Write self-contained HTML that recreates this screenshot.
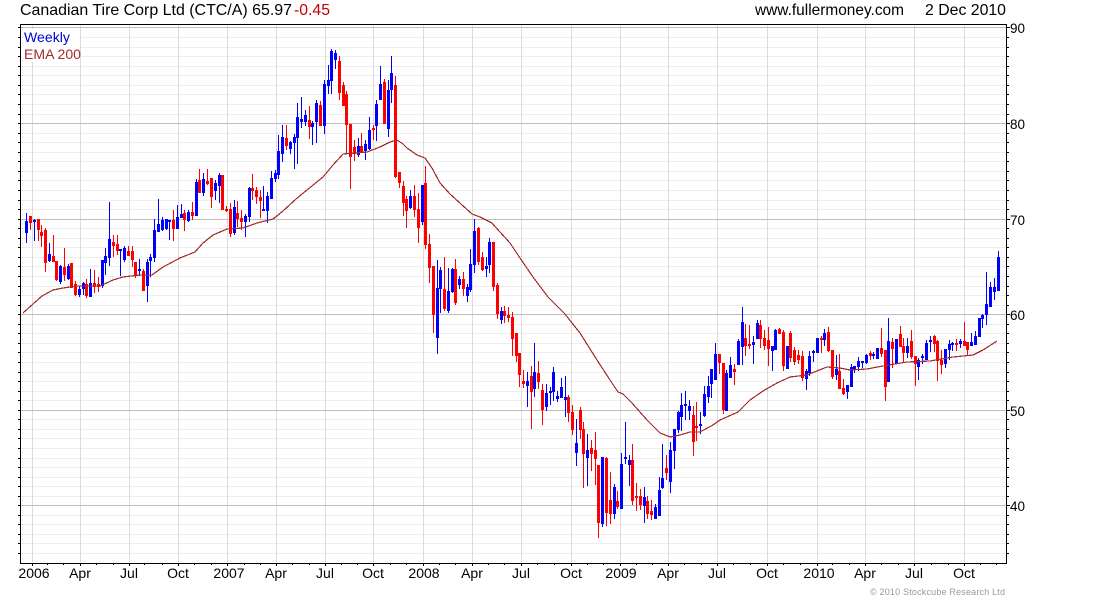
<!DOCTYPE html>
<html>
<head>
<meta charset="utf-8">
<title>Canadian Tire Corp Ltd</title>
<style>
html,body{margin:0;padding:0;background:#fff;width:1100px;height:600px;overflow:hidden}
svg{display:block}
text{font-family:"Liberation Sans",Arial,sans-serif}
</style>
</head>
<body>
<svg width="1100" height="600" viewBox="0 0 1100 600" xmlns="http://www.w3.org/2000/svg">
<rect width="1100" height="600" fill="#fff"/>
<g shape-rendering="crispEdges" fill="none">
<path stroke="#eeeeee" d="M21 37.5H1006M21 47.5H1006M21 56.5H1006M21 66.5H1006M21 75.5H1006M21 85.5H1006M21 94.5H1006M21 104.5H1006M21 114.5H1006M21 133.5H1006M21 142.5H1006M21 152.5H1006M21 161.5H1006M21 171.5H1006M21 180.5H1006M21 190.5H1006M21 200.5H1006M21 209.5H1006M21 228.5H1006M21 238.5H1006M21 247.5H1006M21 257.5H1006M21 266.5H1006M21 276.5H1006M21 286.5H1006M21 295.5H1006M21 305.5H1006M21 324.5H1006M21 333.5H1006M21 343.5H1006M21 352.5H1006M21 362.5H1006M21 372.5H1006M21 381.5H1006M21 391.5H1006M21 400.5H1006M21 419.5H1006M21 429.5H1006M21 438.5H1006M21 448.5H1006M21 458.5H1006M21 467.5H1006M21 477.5H1006M21 486.5H1006M21 496.5H1006M21 515.5H1006M21 524.5H1006M21 534.5H1006M21 543.5H1006M21 553.5H1006"/>
<path stroke="#dcdcdc" d="M32.5 25V563M80.5 25V563M129.5 25V563M178.5 25V563M227.5 25V563M276.5 25V563M325.5 25V563M373.5 25V563M423.5 25V563M472.5 25V563M521.5 25V563M571.5 25V563M620.5 25V563M668.5 25V563M717.5 25V563M767.5 25V563M817.5 25V563M865.5 25V563M914.5 25V563M964.5 25V563"/>
<path stroke="#bdbdbd" d="M21 27.5H1006M21 123.5H1006M21 219.5H1006M21 314.5H1006M21 410.5H1006M21 505.5H1006"/>
<rect x="21" y="29" width="59" height="33" fill="#fff"/>
</g>
<g shape-rendering="crispEdges" fill="none">
<path stroke="#0000ff" stroke-width="1" d="M26.5 213V243M34.5 219V241M49.5 243V262M60.5 265V284M68.5 264V280M79.5 286V297M83.5 282V295M90.5 269V297M102.5 260V288M105.5 248V275M109.5 202V266M120.5 249V276M124.5 246V262M139.5 259V276M147.5 259V302M150.5 254V277M154.5 219V262M158.5 199V232M162.5 217V231M166.5 219V230M169.5 220V240M177.5 205V229M181.5 204V218M188.5 210V222M196.5 179V216M203.5 173V196M215.5 180V200M219.5 173V203M234.5 200V235M245.5 214V237M249.5 187V222M263.5 186V211M267.5 192V223M271.5 171V199M275.5 170V182M278.5 135V179M282.5 125V162M290.5 141V154M294.5 134V169M297.5 103V164M301.5 97V128M305.5 110V126M312.5 121V145M316.5 100V143M324.5 80V134M328.5 65V94M331.5 49V94M335.5 50V69M358.5 138V157M365.5 140V160M369.5 117V150M376.5 100V141M380.5 66V100M388.5 80V137M391.5 56V103M410.5 190V209M422.5 185V225M437.5 260V354M440.5 267V313M448.5 268V313M452.5 268V293M459.5 276V289M467.5 284V302M470.5 249V292M474.5 219V273M486.5 257V277M489.5 238V273M501.5 307V324M527.5 372V407M534.5 343V397M546.5 384V411M550.5 387V405M553.5 367V401M557.5 391V402M561.5 378V398M565.5 376V417M576.5 419V466M587.5 434V486M602.5 457V527M614.5 484V519M621.5 453V509M625.5 422V464M629.5 455V486M644.5 487V523M655.5 504V519M659.5 477V516M662.5 444V489M670.5 442V493M674.5 429V469M678.5 411V433M681.5 393V431M685.5 391V420M689.5 400V420M700.5 412V434M704.5 386V417M708.5 376V403M711.5 369V398M715.5 343V380M726.5 370V411M730.5 357V378M738.5 339V365M742.5 307V365M753.5 336V364M757.5 320V339M772.5 346V371M775.5 329V350M787.5 346V369M806.5 369V390M809.5 351V376M813.5 350V362M817.5 338V353M824.5 329V346M836.5 355V380M847.5 385V399M851.5 364V387M854.5 366V373M858.5 357V371M862.5 361V368M866.5 354V364M873.5 352V359M877.5 348V359M888.5 318V382M896.5 339V364M907.5 338V358M918.5 358V380M922.5 354V364M926.5 340V360M930.5 336V352M945.5 349V368M949.5 340V360M952.5 342V351M960.5 339V348M971.5 333V346M975.5 331V345M979.5 318V337M982.5 314V328M986.5 272V325M990.5 282V307M994.5 278V300M998.5 251V291"/>
<path stroke="#0000ff" stroke-width="3" d="M26.5 221V233M34.5 220V222M49.5 254V261M60.5 266V282M68.5 266V279M79.5 289V295M83.5 283V289M90.5 283V297M102.5 260V286M105.5 256V263M109.5 239V258M120.5 249V251M124.5 248V260M139.5 269V271M147.5 262V286M150.5 257V261M154.5 230V258M158.5 224V232M162.5 220V230M166.5 219V229M169.5 220V222M177.5 217V229M181.5 214V218M188.5 212V221M196.5 182V216M203.5 179V193M215.5 183V191M219.5 175V186M234.5 207V233M245.5 216V222M249.5 188V217M263.5 209V211M267.5 196V211M271.5 178V199M275.5 173V179M278.5 151V175M282.5 137V154M290.5 142V149M294.5 137V143M297.5 117V138M301.5 119V122M305.5 115V122M312.5 123V127M316.5 103V122M324.5 84V126M328.5 80V86M331.5 51V81M335.5 53V60M358.5 146V155M365.5 144V151M369.5 130V149M376.5 104V126M380.5 84V100M388.5 90V129M391.5 73V90M410.5 196V208M422.5 185V222M437.5 288V338M440.5 270V289M448.5 291V311M452.5 269V292M459.5 279V285M467.5 287V296M470.5 264V290M474.5 231V265M486.5 266V269M489.5 242V265M501.5 311V320M527.5 381V386M534.5 372V389M546.5 393V407M550.5 391V393M553.5 372V392M557.5 396V399M561.5 387V398M565.5 397V400M576.5 443V453M587.5 450V458M602.5 457V524M614.5 487V514M621.5 464V509M625.5 457V459M629.5 460V465M644.5 497V506M655.5 507V519M659.5 490V516M662.5 478V488M670.5 450V482M674.5 429V451M678.5 412V430M681.5 405V417M685.5 404V406M689.5 406V411M700.5 424V426M704.5 394V416M708.5 386V397M711.5 369V384M715.5 354V380M726.5 373V411M730.5 365V378M738.5 341V365M742.5 322V347M753.5 342V345M757.5 323V339M772.5 346V351M775.5 330V350M787.5 346V369M806.5 371V379M809.5 356V373M813.5 351V353M817.5 338V353M824.5 333V340M836.5 369V375M847.5 385V392M851.5 367V387M854.5 366V369M858.5 361V367M862.5 361V363M866.5 355V363M873.5 354V356M877.5 348V359M888.5 341V382M896.5 339V364M907.5 346V353M918.5 360V367M922.5 356V358M926.5 343V360M930.5 340V342M945.5 349V364M949.5 344V350M952.5 343V345M960.5 341V344M971.5 342V346M975.5 336V345M979.5 318V337M982.5 315V319M986.5 304V315M990.5 287V307M994.5 287V292M998.5 257V291"/>
<path stroke="#ff0000" stroke-width="1" d="M30.5 216V230M38.5 219V241M41.5 225V247M45.5 228V272M53.5 235V262M56.5 261V281M64.5 248V281M71.5 263V288M75.5 281V296M86.5 279V298M94.5 270V293M98.5 277V292M113.5 235V257M117.5 235V255M128.5 246V256M132.5 246V267M135.5 262V278M143.5 269V291M173.5 210V241M184.5 210V231M192.5 202V220M199.5 169V193M207.5 169V185M211.5 178V208M222.5 175V210M226.5 206V212M230.5 203V237M237.5 201V227M241.5 210V230M252.5 174V200M256.5 187V204M260.5 190V218M286.5 125V150M309.5 106V139M320.5 101V126M339.5 56V100M343.5 82V106M346.5 91V154M350.5 124V189M354.5 140V161M361.5 133V153M373.5 125V140M384.5 79V124M395.5 76V178M399.5 172V188M403.5 181V216M406.5 196V228M414.5 185V217M418.5 193V243M425.5 166V249M429.5 234V283M433.5 266V333M444.5 257V311M455.5 259V305M463.5 272V296M478.5 227V265M482.5 252V271M493.5 242V291M497.5 283V319M504.5 306V323M508.5 307V322M512.5 312V356M516.5 333V362M519.5 353V387M523.5 370V388M531.5 366V429M538.5 361V389M542.5 384V425M568.5 395V422M572.5 405V435M580.5 407V439M583.5 422V488M591.5 440V471M595.5 432V485M598.5 465V538M606.5 457V526M610.5 472V524M617.5 491V509M632.5 444V505M636.5 483V511M640.5 489V510M647.5 496V519M651.5 500V520M666.5 455V480M693.5 406V456M696.5 402V441M719.5 354V374M723.5 363V414M734.5 364V385M745.5 324V356M749.5 325V349M760.5 320V348M764.5 330V350M768.5 327V366M779.5 328V334M783.5 330V371M790.5 331V362M794.5 347V365M798.5 350V364M802.5 351V381M821.5 336V353M828.5 327V352M832.5 350V379M839.5 354V389M843.5 379V395M870.5 351V360M881.5 328V357M885.5 350V401M892.5 338V368M900.5 326V347M903.5 338V363M911.5 330V359M915.5 356V386M934.5 335V352M937.5 340V381M941.5 350V374M956.5 339V351M964.5 322V346M967.5 342V356"/>
<path stroke="#ff0000" stroke-width="3" d="M30.5 216V223M38.5 219V230M41.5 232V236M45.5 230V263M53.5 256V262M56.5 261V280M64.5 267V275M71.5 263V288M75.5 284V295M86.5 284V296M94.5 283V287M98.5 284V287M113.5 242V246M117.5 244V251M128.5 251V256M132.5 251V260M135.5 262V276M143.5 271V291M173.5 220V229M184.5 213V220M192.5 212V216M199.5 180V193M207.5 181V184M211.5 178V197M222.5 175V210M226.5 209V211M230.5 209V234M237.5 213V219M241.5 218V222M252.5 188V191M256.5 190V197M260.5 197V201M286.5 138V146M309.5 120V127M320.5 105V126M339.5 61V93M343.5 85V106M346.5 94V125M350.5 124V157M354.5 147V154M361.5 146V152M373.5 128V130M384.5 82V124M395.5 85V177M399.5 172V183M403.5 186V203M406.5 199V211M414.5 196V210M418.5 209V228M425.5 183V245M429.5 244V268M433.5 266V315M444.5 289V309M455.5 269V303M463.5 279V289M478.5 228V262M482.5 257V270M493.5 242V287M497.5 285V314M504.5 311V316M508.5 315V318M512.5 317V339M516.5 333V356M519.5 353V375M523.5 381V384M531.5 376V392M538.5 373V382M542.5 390V410M568.5 397V413M572.5 412V430M580.5 410V430M583.5 429V454M591.5 448V454M595.5 450V459M598.5 465V523M606.5 458V513M610.5 500V514M617.5 501V507M632.5 460V501M636.5 496V498M640.5 496V505M647.5 501V514M651.5 511V515M666.5 468V473M693.5 415V442M696.5 426V428M719.5 354V363M723.5 363V410M734.5 369V372M745.5 338V346M749.5 344V346M760.5 325V339M764.5 338V346M768.5 340V349M779.5 329V334M783.5 332V366M790.5 333V358M794.5 350V362M798.5 355V360M802.5 356V378M821.5 338V340M828.5 332V351M832.5 350V377M839.5 371V389M843.5 388V394M870.5 353V356M881.5 348V354M885.5 350V387M892.5 342V349M900.5 334V347M903.5 346V353M911.5 341V357M915.5 356V364M934.5 336V344M937.5 341V361M941.5 360V365M956.5 343V345M964.5 341V346M967.5 342V350"/>
</g>
<polyline fill="none" stroke="#a52a2a" stroke-width="1.2" shape-rendering="crispEdges" points="23,313 33,304 42,296 53,290 63,288 77,286 100,286 113,280 123,277 140,275 152,275 163,267 180,258 195,252 203,243 213,235 227,229 243,228 257,223 273,219 283,211 296,199 307,190 323,177 333,165 343,154 367,152 380,147 390,142 397,140 403,144 407,148 417,155 425,158 432,168 440,183 450,194 472,214 480,217 492,223 500,232 510,243 520,258 533,277 548,297 565,314 572,323 580,333 597,360 610,380 618,392 623,394 632,403 647,420 660,433 670,437 680,435 690,432 700,432 713,425 720,420 738,412 750,400 763,391 777,383 790,377 807,375 827,367 840,368 850,370 867,369 883,366 907,362 930,361 953,357 973,355 983,350 997,341"/>
<g shape-rendering="crispEdges" fill="none" stroke="#000">
<path d="M20.5 24.5H1006.5V563.5H20.5Z"/>
<path d="M18 37.5H20M18 47.5H20M18 56.5H20M18 66.5H20M18 75.5H20M18 85.5H20M18 94.5H20M18 104.5H20M18 114.5H20M18 133.5H20M18 142.5H20M18 152.5H20M18 161.5H20M18 171.5H20M18 180.5H20M18 190.5H20M18 200.5H20M18 209.5H20M18 228.5H20M18 238.5H20M18 247.5H20M18 257.5H20M18 266.5H20M18 276.5H20M18 286.5H20M18 295.5H20M18 305.5H20M18 324.5H20M18 333.5H20M18 343.5H20M18 352.5H20M18 362.5H20M18 372.5H20M18 381.5H20M18 391.5H20M18 400.5H20M18 419.5H20M18 429.5H20M18 438.5H20M18 448.5H20M18 458.5H20M18 467.5H20M18 477.5H20M18 486.5H20M18 496.5H20M18 515.5H20M18 524.5H20M18 534.5H20M18 543.5H20M18 553.5H20M18 27.5H20M18 123.5H20M18 219.5H20M18 314.5H20M18 410.5H20M18 505.5H20"/>
<path d="M1007 37.5H1009M1007 47.5H1009M1007 56.5H1009M1007 66.5H1009M1007 75.5H1009M1007 85.5H1009M1007 94.5H1009M1007 104.5H1009M1007 114.5H1009M1007 133.5H1009M1007 142.5H1009M1007 152.5H1009M1007 161.5H1009M1007 171.5H1009M1007 180.5H1009M1007 190.5H1009M1007 200.5H1009M1007 209.5H1009M1007 228.5H1009M1007 238.5H1009M1007 247.5H1009M1007 257.5H1009M1007 266.5H1009M1007 276.5H1009M1007 286.5H1009M1007 295.5H1009M1007 305.5H1009M1007 324.5H1009M1007 333.5H1009M1007 343.5H1009M1007 352.5H1009M1007 362.5H1009M1007 372.5H1009M1007 381.5H1009M1007 391.5H1009M1007 400.5H1009M1007 419.5H1009M1007 429.5H1009M1007 438.5H1009M1007 448.5H1009M1007 458.5H1009M1007 467.5H1009M1007 477.5H1009M1007 486.5H1009M1007 496.5H1009M1007 515.5H1009M1007 524.5H1009M1007 534.5H1009M1007 543.5H1009M1007 553.5H1009M1007 27.5H1010M1007 123.5H1010M1007 219.5H1010M1007 314.5H1010M1007 410.5H1010M1007 505.5H1010"/>
<path d="M47.5 564V565M63.5 564V565M96.5 564V565M113.5 564V565M144.5 564V565M162.5 564V565M194.5 564V565M211.5 564V565M244.5 564V565M260.5 564V565M292.5 564V565M309.5 564V565M341.5 564V565M357.5 564V565M390.5 564V565M406.5 564V565M439.5 564V565M455.5 564V565M488.5 564V565M504.5 564V565M537.5 564V565M554.5 564V565M587.5 564V565M603.5 564V565M636.5 564V565M652.5 564V565M684.5 564V565M701.5 564V565M733.5 564V565M750.5 564V565M783.5 564V565M800.5 564V565M832.5 564V565M849.5 564V565M881.5 564V565M898.5 564V565M931.5 564V565M948.5 564V565M980.5 564V565M996.5 564V565"/>
<path d="M32.5 564V566M80.5 564V566M129.5 564V566M178.5 564V566M227.5 564V566M276.5 564V566M325.5 564V566M373.5 564V566M423.5 564V566M472.5 564V566M521.5 564V566M571.5 564V566M620.5 564V566M668.5 564V566M717.5 564V566M767.5 564V566M817.5 564V566M865.5 564V566M914.5 564V566M964.5 564V566"/>
</g>
<text x="20" y="15" font-size="16" fill="#000" textLength="272" lengthAdjust="spacingAndGlyphs">Canadian Tire Corp Ltd (CTC/A) 65.97</text>
<text x="294" y="15" font-size="16" fill="#c00000" textLength="36" lengthAdjust="spacingAndGlyphs">-0.45</text>
<text x="755" y="15" font-size="16" fill="#000" textLength="149" lengthAdjust="spacingAndGlyphs">www.fullermoney.com</text>
<text x="925" y="15" font-size="16" fill="#000" textLength="81" lengthAdjust="spacingAndGlyphs">2 Dec 2010</text>
<text x="24" y="42" font-size="14" fill="#0000cc" textLength="46" lengthAdjust="spacingAndGlyphs">Weekly</text>
<text x="24" y="59" font-size="14" fill="#a52a2a" textLength="57" lengthAdjust="spacingAndGlyphs">EMA 200</text>
<g font-size="14" fill="#000">
<text x="1010" y="33" textLength="15" lengthAdjust="spacingAndGlyphs">90</text>
<text x="1010" y="129" textLength="15" lengthAdjust="spacingAndGlyphs">80</text>
<text x="1010" y="225" textLength="15" lengthAdjust="spacingAndGlyphs">70</text>
<text x="1010" y="320" textLength="15" lengthAdjust="spacingAndGlyphs">60</text>
<text x="1010" y="416" textLength="15" lengthAdjust="spacingAndGlyphs">50</text>
<text x="1010" y="511" textLength="15" lengthAdjust="spacingAndGlyphs">40</text>
</g>
<g font-size="14" fill="#000" text-anchor="middle">
<text x="34" y="578">2006</text>
<text x="80" y="578">Apr</text>
<text x="129" y="578">Jul</text>
<text x="178" y="578">Oct</text>
<text x="229" y="578">2007</text>
<text x="276" y="578">Apr</text>
<text x="325" y="578">Jul</text>
<text x="373" y="578">Oct</text>
<text x="424" y="578">2008</text>
<text x="472" y="578">Apr</text>
<text x="521" y="578">Jul</text>
<text x="571" y="578">Oct</text>
<text x="621" y="578">2009</text>
<text x="668" y="578">Apr</text>
<text x="717" y="578">Jul</text>
<text x="767" y="578">Oct</text>
<text x="819" y="578">2010</text>
<text x="865" y="578">Apr</text>
<text x="914" y="578">Jul</text>
<text x="964" y="578">Oct</text>
</g>
<text x="870" y="595" font-size="9" fill="#999" textLength="135" lengthAdjust="spacing">© 2010 Stockcube Research Ltd</text>
</svg>
</body>
</html>
